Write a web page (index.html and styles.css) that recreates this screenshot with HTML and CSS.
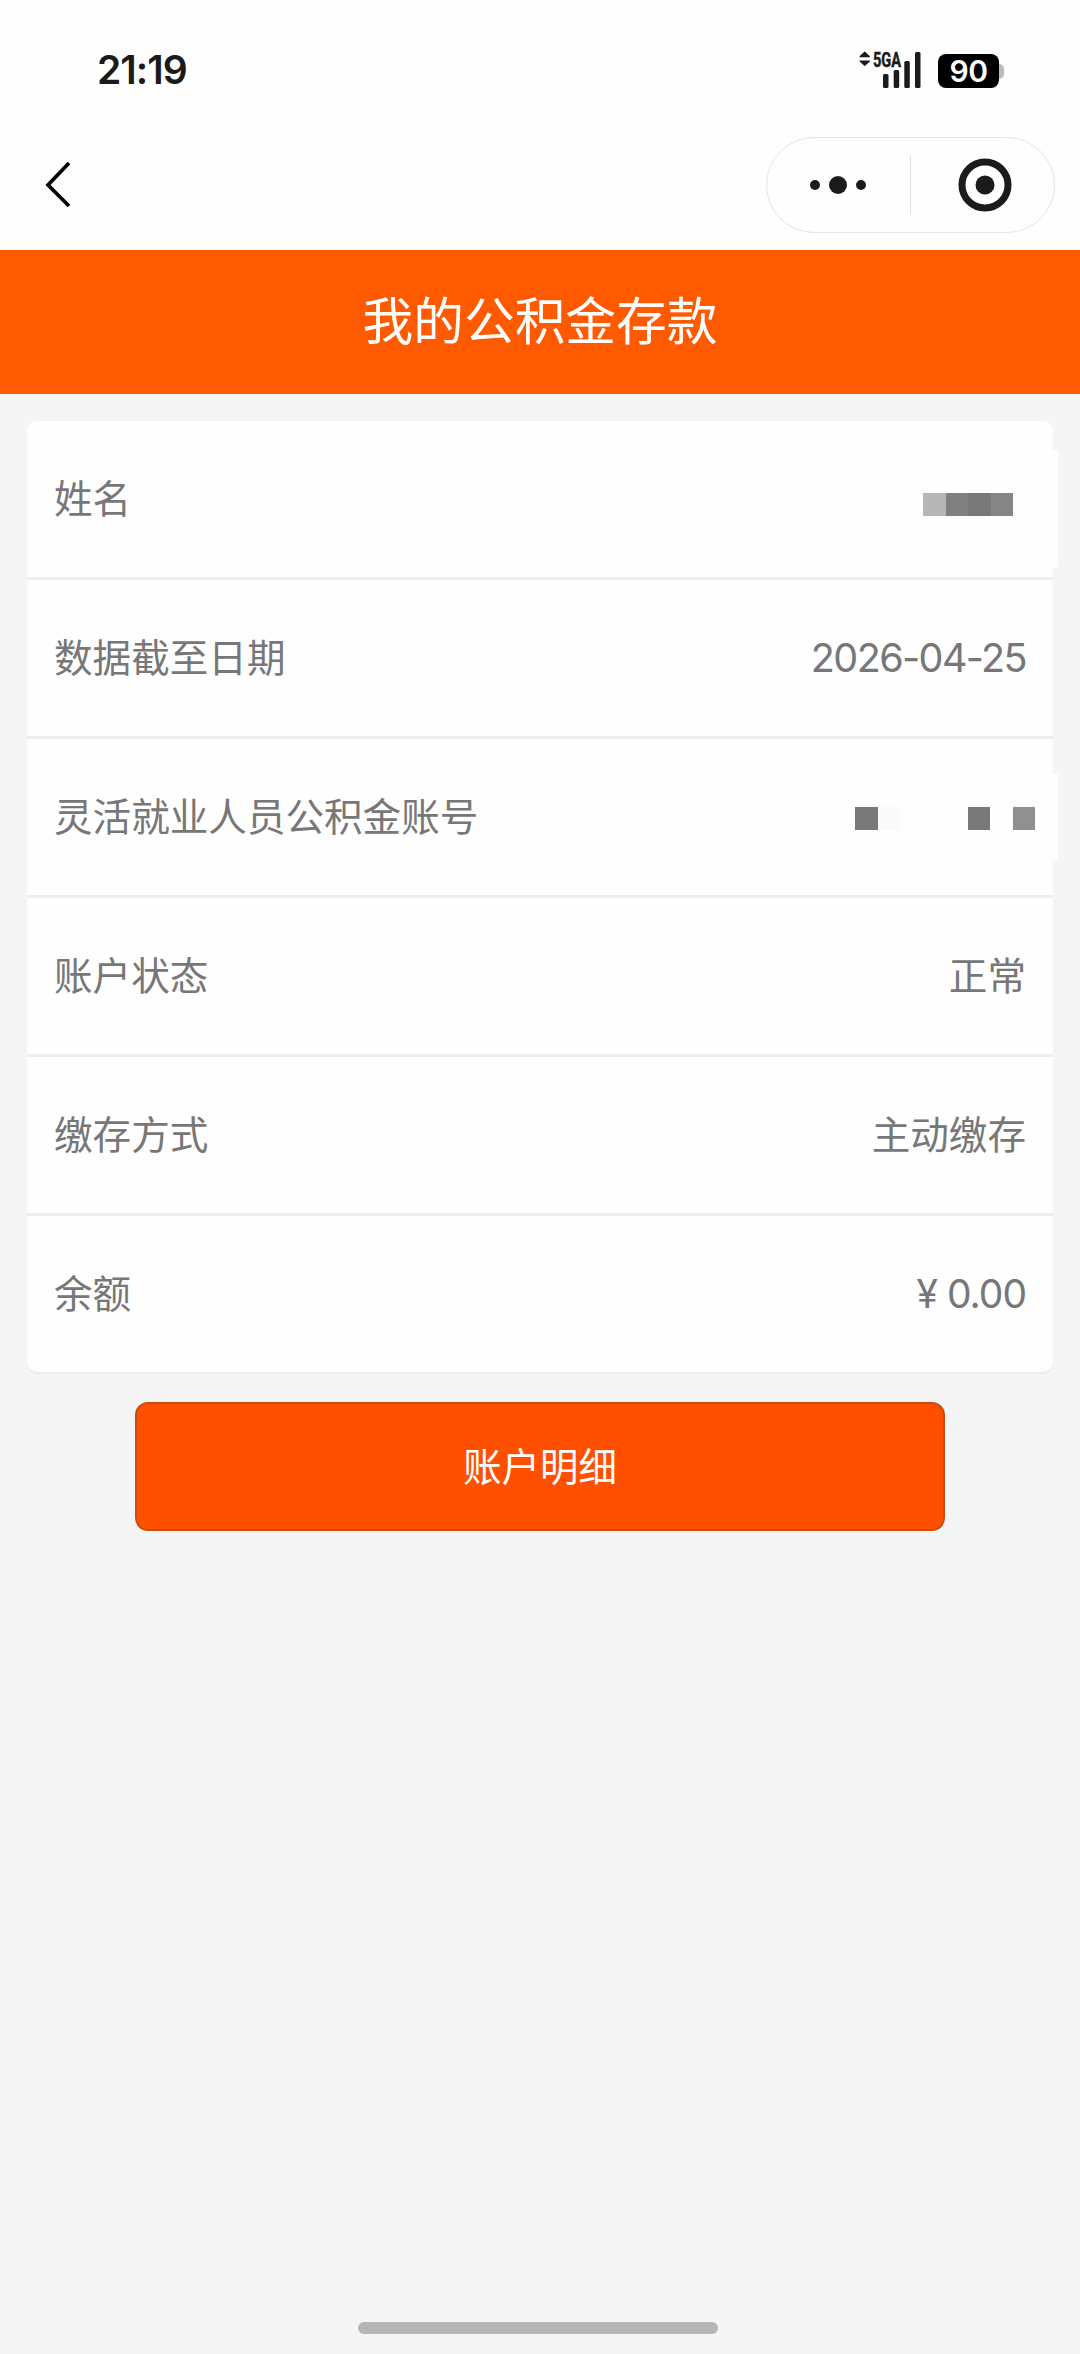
FILE: index.html
```html
<!DOCTYPE html>
<html lang="zh-CN">
<head>
<meta charset="utf-8">
<title>我的公积金存款</title>
<link rel="stylesheet" href="styles.css">
</head>
<body>
<div class="screen">
  <header class="top">
    <div class="status">
      <span class="clock">21:19</span>
      <div class="indicators">
        <svg class="signal" width="64" height="40" viewBox="0 0 64 40">
          <path d="M5 6.6 9.7 2.2 14.4 6.6zM5 11 9.7 15.4 14.4 11z" fill="#1b1b1b" stroke="#1b1b1b" stroke-width="1.2" stroke-linejoin="round"/>
          <text class="network" x="18" y="17" textLength="28" lengthAdjust="spacingAndGlyphs">5GA</text>
          <g fill="#1b1b1b"><rect x="28" y="24" width="5.5" height="14" rx="1.5"/><rect x="38.7" y="20" width="5.5" height="18" rx="1.5"/><rect x="49.3" y="11" width="5.5" height="27" rx="1.5"/><rect x="60" y="2" width="5.5" height="36" rx="1.5"/></g>
        </svg>
        <div class="battery"><span class="level">90</span></div>
      </div>
    </div>
    <nav class="nav">
      <svg class="back" width="30" height="50" viewBox="0 0 30 50"><path d="M25 3 4 25 25 46" fill="none" stroke="#000" stroke-width="3.7"/></svg>
      <div class="capsule">
        <svg class="more" width="60" height="20" viewBox="0 0 60 20" fill="#1b1b1b"><circle cx="7" cy="10" r="5"/><circle cx="30" cy="10" r="9"/><circle cx="53" cy="10" r="5"/></svg>
        <span class="divider"></span>
        <svg class="close" width="54" height="54" viewBox="0 0 54 54"><circle cx="27" cy="27" r="23" fill="none" stroke="#1b1b1b" stroke-width="7"/><circle cx="27" cy="27" r="9.5" fill="#1b1b1b"/></svg>
      </div>
    </nav>
  </header>
  <h1 class="banner">我的公积金存款</h1>
  <main class="content">
    <dl class="card">
      <div class="row"><dt>姓名</dt><dd class="masked masked-name"><i class="c1"></i><i class="c2"></i><i class="c3"></i><i class="c4"></i></dd></div>
      <div class="row"><dt>数据截至日期</dt><dd class="date">2026-04-25</dd></div>
      <div class="row"><dt>灵活就业人员公积金账号</dt><dd class="masked masked-account"><i class="c3"></i><i class="c5"></i><i></i><i></i><i></i><i class="c3"></i><i></i><i class="c6"></i></dd></div>
      <div class="row"><dt>账户状态</dt><dd>正常</dd></div>
      <div class="row"><dt>缴存方式</dt><dd>主动缴存</dd></div>
      <div class="row"><dt>余额</dt><dd class="amount">¥ 0.00</dd></div>
    </dl>
    <button class="detail" type="button">账户明细</button>
  </main>
  <div class="home-bar"></div>
</div>
</body>
</html>
```
FILE: styles.css
```css
* { box-sizing: border-box; }
body { margin: 0; background: #f5f5f5; color: #777; font-family: Inter, "Noto Sans CJK SC", sans-serif; }
.screen { display: flex; flex-direction: column; width: 1080px; height: 2354px; }
.top { height: 250px; background: #fefefe; }
.status { display: flex; justify-content: space-between; height: 137px; padding: 0 76px 0 97px; }
.clock { margin-top: 46px; font-size: 39px; line-height: 48px; font-weight: 600; color: #1b1b1b; letter-spacing: -1px; }
.indicators { display: flex; align-items: flex-start; gap: 19px; padding-top: 50px; }
.signal { overflow: visible; }
.network { font: 700 20px Roboto, sans-serif; fill: #1b1b1b; stroke: #1b1b1b; stroke-width: .5px; }
.battery { position: relative; width: 61px; height: 34px; margin: 4px 5px 0 0; border-radius: 8px; background: #000; }
.battery::after { content: ""; position: absolute; right: -5px; top: 10px; width: 5px; height: 15px; border-radius: 0 5px 5px 0; background: #bbb; }
.level { display: block; text-align: center; font-size: 30px; line-height: 35px; font-weight: 600; color: #fff; letter-spacing: -0.5px; }
.nav { display: flex; justify-content: space-between; padding: 0 25px 0 44px; }
.back { margin-top: 23px; }
.capsule { display: flex; align-items: center; width: 289px; height: 96px; padding-left: 41px; border: 1px solid #e5e5e5; border-radius: 48px; }
.divider { width: 1px; height: 58px; margin-left: 42px; background: #ddd; }
.close { margin-left: 47px; }
.banner { flex: none; height: 144px; margin: 0; background: #ff5a00; color: #fff; text-align: center; font-size: 50.7px; line-height: 144px; font-weight: 400; }
.content { flex: 1; padding: 27px 27px 0; }
.card { margin: 0; background: #fefefe; border-radius: 10px; box-shadow: 0 2px 1px #ececec; }
.row { display: flex; align-items: center; justify-content: space-between; height: 159px; padding: 0 27px 1px; border-bottom: 3px solid #eee; font-size: 38.6px; line-height: 56px; }
.row:last-child { height: 156px; padding-bottom: 0; border-bottom: 0; }
dd { margin: 0; }
.date { font-size: 39.5px; letter-spacing: -1.6px; }
.amount { font-size: 39px; letter-spacing: -1px; }
.masked { display: grid; grid-auto-flow: column; grid-auto-columns: 22.5px; background: #fefefe; }
.masked i { height: 23px; }
.masked-name { height: 117px; margin: 19px -32px 0 0; padding: 43px 45px 0 0; }
.masked-account { height: 87px; margin: 2px -32px 0 0; padding: 33px 23px 0 0; }
.c1 { background: #b7b7b7; }
.c2 { background: #808080; }
.c3 { background: #787878; }
.c4 { background: #868686; }
.c5 { background: #fafafa; }
.c6 { background: #909090; }
.detail { display: block; width: 810px; height: 129px; margin: 30px auto 0; padding: 0 0 6px; border: 2px solid #cb4a10; border-radius: 13px; background: #ff5000; color: #fff; font: 38.4px "Noto Sans CJK SC", sans-serif; }
.home-bar { flex: none; width: 360px; height: 12px; margin: 0 auto 20px 358px; border-radius: 6px; background: #b5b5b5; }
```
